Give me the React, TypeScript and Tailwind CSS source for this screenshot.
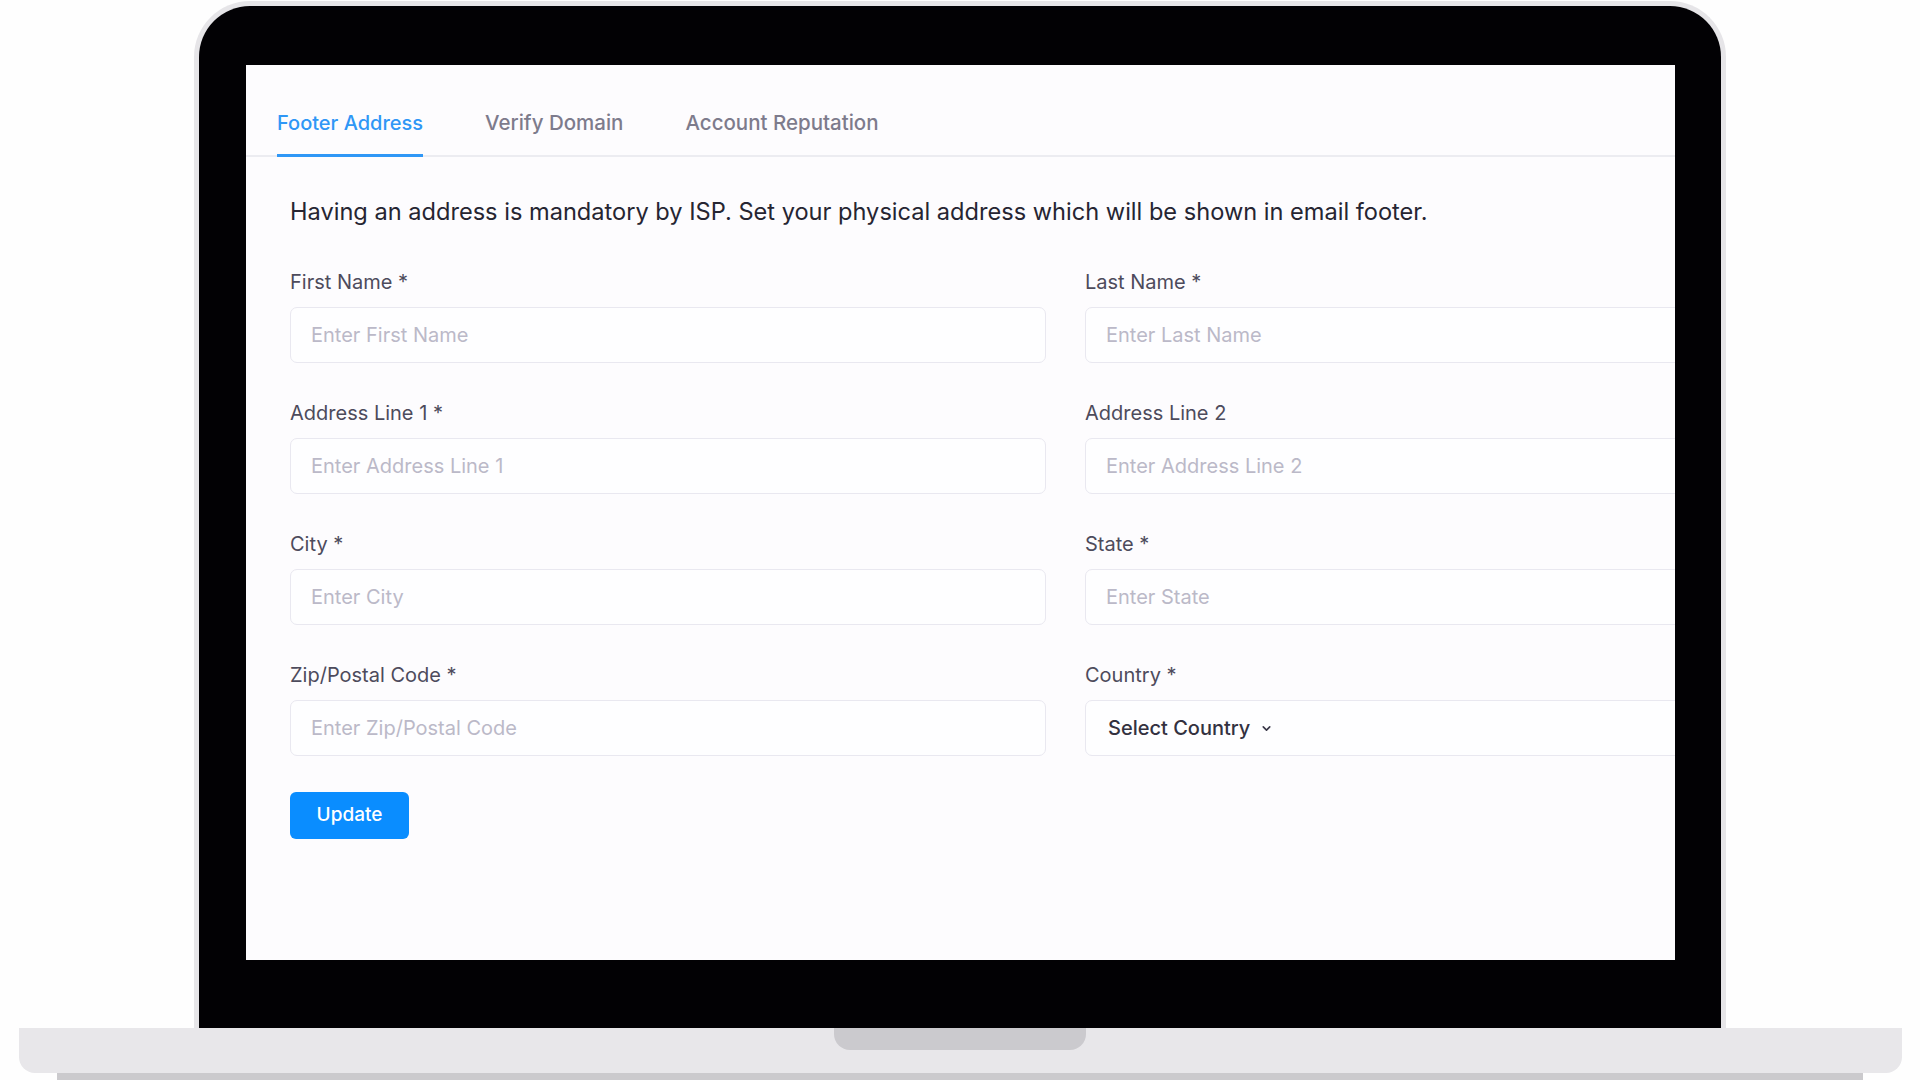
import React from "react";

const fields: { label: string; placeholder?: string; select?: boolean }[] = [
  { label: "First Name *", placeholder: "Enter First Name" },
  { label: "Last Name *", placeholder: "Enter Last Name" },
  { label: "Address Line 1 *", placeholder: "Enter Address Line 1" },
  { label: "Address Line 2", placeholder: "Enter Address Line 2" },
  { label: "City *", placeholder: "Enter City" },
  { label: "State *", placeholder: "Enter State" },
  { label: "Zip/Postal Code *", placeholder: "Enter Zip/Postal Code" },
  { label: "Country *", select: true },
];

function Chevron() {
  return (
    <svg width="13" height="13" viewBox="0 0 24 24" fill="none" stroke="#3a3848" strokeWidth="3" strokeLinecap="round" strokeLinejoin="round">
      <path d="M6 9l6 6 6-6" />
    </svg>
  );
}

export default function App() {
  return (
    <div className="w-[1920px] h-[1080px] overflow-hidden bg-[#fefefe] flex flex-col items-center font-[Inter,sans-serif]">
      {/* Lid */}
      <div className="mt-[1px] w-[1532px] h-[1027px] shrink-0 box-border border-[5px] border-b-0 border-[#e6e5e8] rounded-t-[56px] bg-[#020104] pl-[47px] pt-[59px]">
        <div className="w-[1429px] h-[895px] bg-[#fdfcfe] overflow-hidden">
          {/* Tabs */}
          <div className="h-[92px] box-border border-b-2 border-[#ececf1] flex items-stretch gap-[62px] px-[31px]">
            <div className="-mb-[2px] box-border border-b-[3px] border-[#2f97f6] pt-[44px] text-[20px] leading-[28px] font-medium text-[#2f97f6] whitespace-nowrap">
              Footer Address
            </div>
            <div className="pt-[44px] text-[20.5px] leading-[28px] font-medium text-[#7d7b8c] whitespace-nowrap">
              Verify Domain
            </div>
            <div className="pt-[44px] text-[20.5px] leading-[28px] font-medium text-[#7d7b8c] whitespace-nowrap">
              Account Reputation
            </div>
          </div>

          <div className="pl-[44px] pt-[39px]">
            <p className="text-[23.6px] leading-[32px] text-[#262532] whitespace-nowrap">
              Having an address is mandatory by ISP. Set your physical address which will be shown in email footer.
            </p>

            <div className="mt-[40px] grid grid-cols-[756px_756px] gap-x-[39px] gap-y-[36px]">
              {fields.map((f) => (
                <div key={f.label} className="flex flex-col">
                  <label className="text-[20px] leading-[28px] text-[#4d4b5c] whitespace-nowrap">{f.label}</label>
                  <div className="mt-[11px] h-[56px] box-border border-[1.5px] border-[#e9e8f0] rounded-[7px] bg-[#fefeff] flex items-center pl-[20px]">
                    {f.select ? (
                      <div className="flex items-center gap-[10px] pl-[2px]">
                        <span className="text-[20px] font-medium text-[#33313f] whitespace-nowrap">Select Country</span>
                        <Chevron />
                      </div>
                    ) : (
                      <span className="text-[20px] text-[#bbb9c8] whitespace-nowrap">{f.placeholder}</span>
                    )}
                  </div>
                </div>
              ))}
            </div>

            <button className="mt-[36px] w-[119px] h-[47px] rounded-[6px] bg-[#0a8dff] text-white text-[19px] font-medium flex items-center justify-center">
              Update
            </button>
          </div>
        </div>
      </div>
      {/* Base */}
      <div className="w-[1883px] h-[45px] shrink-0 bg-[#e8e7ea] rounded-b-[16px] flex justify-center">
        <div className="w-[252px] h-[22px] bg-[#cbcace] rounded-b-[16px]" />
      </div>
      <div className="w-[1806px] h-[7px] shrink-0 bg-[#cbcacd]" />
    </div>
  );
}
